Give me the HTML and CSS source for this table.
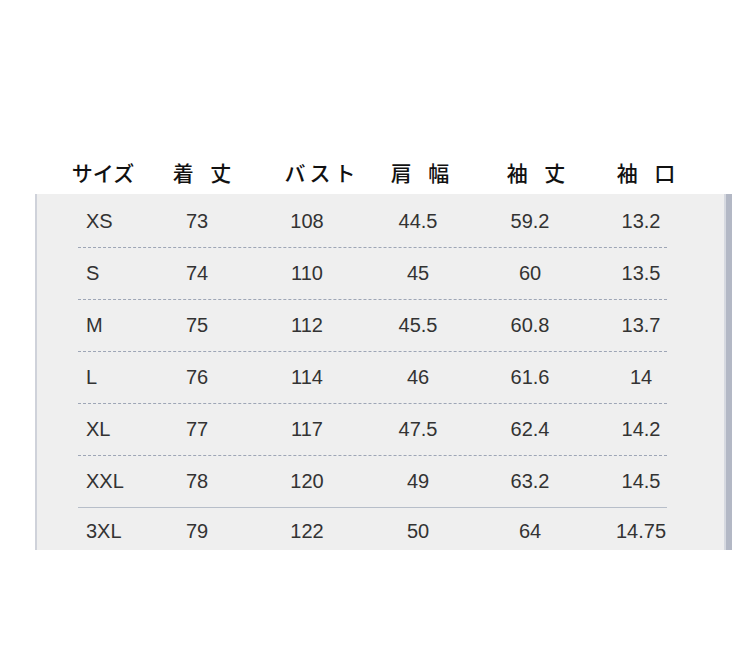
FILE: index.html
```html
<!DOCTYPE html>
<html lang="ja">
<head>
<meta charset="utf-8">
<title>サイズ表</title>
<link rel="stylesheet" href="styles.css">
</head>
<body>
<div class="page">
  <div class="head">
    <div class="h">サイズ</div>
    <div class="h wide">着&nbsp;丈</div>
    <div class="h sp">バスト</div>
    <div class="h wide">肩&nbsp;幅</div>
    <div class="h wide">袖&nbsp;丈</div>
    <div class="h wide">袖&nbsp;口</div>
  </div>
  <div class="panel">
    <div class="rows">
      <div class="row"><div class="c first">XS</div><div class="c">73</div><div class="c">108</div><div class="c">44.5</div><div class="c">59.2</div><div class="c">13.2</div></div>
      <div class="row"><div class="c first">S</div><div class="c">74</div><div class="c">110</div><div class="c">45</div><div class="c">60</div><div class="c">13.5</div></div>
      <div class="row"><div class="c first">M</div><div class="c">75</div><div class="c">112</div><div class="c">45.5</div><div class="c">60.8</div><div class="c">13.7</div></div>
      <div class="row"><div class="c first">L</div><div class="c">76</div><div class="c">114</div><div class="c">46</div><div class="c">61.6</div><div class="c">14</div></div>
      <div class="row"><div class="c first">XL</div><div class="c">77</div><div class="c">117</div><div class="c">47.5</div><div class="c">62.4</div><div class="c">14.2</div></div>
      <div class="row solid"><div class="c first">XXL</div><div class="c">78</div><div class="c">120</div><div class="c">49</div><div class="c">63.2</div><div class="c">14.5</div></div>
      <div class="row last"><div class="c first">3XL</div><div class="c">79</div><div class="c">122</div><div class="c">50</div><div class="c">64</div><div class="c">14.75</div></div>
    </div>
  </div>
</div>
</body>
</html>
```
FILE: styles.css
```css
html, body {
  margin: 0;
  padding: 0;
  background: #ffffff;
}
.page {
  width: 750px;
  height: 668px;
  padding-top: 157px;
  box-sizing: border-box;
}
.head {
  display: grid;
  grid-template-columns: 90px 108px 128px 72px 160px 60px;
  padding-left: 58px;
  height: 30px;
  margin-bottom: 7px;
}
.h {
  font-family: "Noto Sans CJK JP", sans-serif;
  font-weight: 500;
  font-size: 21px;
  line-height: 30px;
  color: #111111;
  display: flex;
  justify-content: center;
  white-space: nowrap;
  letter-spacing: 0;
}
.h.wide {
  letter-spacing: 6px;
  padding-left: 6px;
}
.h.sp {
  letter-spacing: 4px;
  padding-left: 4px;
}
.panel {
  margin-left: 35px;
  width: 697px;
  box-sizing: border-box;
  height: 356px;
  background: #efefef;
  border-left: 2px solid #cfd2da;
  border-right: 6px solid #b3b8c5;
  box-shadow: inset -2px 0 0 #d6d9e0;
  padding-top: 2px;
}
.rows {
  margin-left: 41px;
  width: 589px;
}
.row {
  display: grid;
  grid-template-columns: 64px 110px 110px 112px 112px 110px;
  height: 51px;
  border-bottom: 1px dashed #9ea6b6;
}
.row.solid {
  border-bottom: 1px solid #b7bec9;
}
.row.last {
  border-bottom: none;
  height: 38px;
  padding-top: 4px;
}
.c {
  font-family: "Liberation Sans", Arial, sans-serif;
  font-size: 20px;
  color: #333333;
  display: flex;
  align-items: center;
  justify-content: center;
  white-space: nowrap;
}
.c.first {
  justify-content: flex-start;
  padding-left: 8px;
}
```
